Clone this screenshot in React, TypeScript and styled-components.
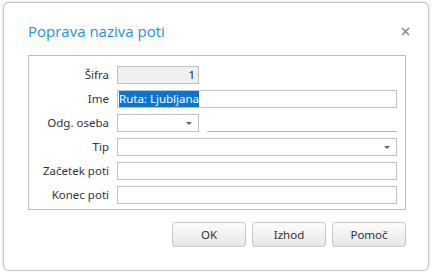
import React from "react";
import styled, { createGlobalStyle } from "styled-components";

const Global = createGlobalStyle`
  html, body { margin: 0; padding: 0; background: #ffffff; }
  body { font-family: "Open Sans", "Noto Sans", sans-serif; }
`;

const Dialog = styled.div`
  box-sizing: border-box;
  margin: 2px 0 0 3px;
  width: 426px;
  height: 269px;
  border: 1px solid #c4c4c4;
  border-radius: 6px;
  background: #fff;
  box-shadow: 0 0 3px rgba(0, 0, 0, 0.18);
  display: flex;
  flex-direction: column;
`;

const Header = styled.div`
  height: 52px;
  display: flex;
  align-items: center;
  justify-content: space-between;
  padding: 0 18px 0 24px;
  box-sizing: border-box;
`;

const Title = styled.div`
  font-family: "Open Sans", sans-serif;
  font-size: 15px;
  color: #1d92dc;
  margin-top: 4px;
`;

const Close = styled.div`
  width: 10px;
  height: 10px;
  margin-top: 4px;
  display: flex;
  align-items: center;
  justify-content: center;
`;

const Fieldset = styled.div`
  box-sizing: border-box;
  margin-left: 24px;
  width: 378px;
  border: 1px solid #bdbdbd;
  padding: 10px 8px 5px 0;
  display: grid;
  grid-template-columns: 80px 1fr;
  column-gap: 8px;
  row-gap: 6px;
`;

const Label = styled.div`
  font-family: "Noto Sans", sans-serif;
  font-size: 11.5px;
  color: #333;
  text-align: right;
  height: 18px;
  line-height: 18px;
  white-space: nowrap;
`;

const Input = styled.div<{ $readonly?: boolean; $align?: string; $width?: number }>`
  box-sizing: border-box;
  height: 18px;
  width: ${(p) => (p.$width ? `${p.$width}px` : "auto")};
  border: 1px solid #c0c0c0;
  background: ${(p) => (p.$readonly ? "#f0f0f0" : "#fff")};
  font-family: "Noto Sans", sans-serif;
  font-size: 11.5px;
  line-height: 16px;
  color: #222;
  text-align: ${(p) => p.$align || "left"};
  padding: 0 3px 0 1px;
  white-space: nowrap;
  overflow: hidden;
`;

const Selected = styled.span`
  background: #0a74d6;
  color: #fff;
  padding: 1px 0;
`;

const Combo = styled.div<{ $width?: number }>`
  box-sizing: border-box;
  height: 18px;
  width: ${(p) => (p.$width ? `${p.$width}px` : "auto")};
  border: 1px solid #c0c0c0;
  background: #fff;
  display: flex;
  align-items: center;
  justify-content: flex-end;
  padding-right: 6px;
`;

const Arrow = styled.div`
  width: 0;
  height: 0;
  border-left: 3.5px solid transparent;
  border-right: 3.5px solid transparent;
  border-top: 3.5px solid #666;
`;

const Pair = styled.div`
  display: flex;
  gap: 8px;
`;

const Underline = styled.div`
  flex: 1;
  height: 18px;
  box-sizing: border-box;
  border-bottom: 1px solid #b8b8b8;
`;

const Buttons = styled.div`
  display: flex;
  gap: 6px;
  margin: 12px 0 0 168px;
`;

const Button = styled.div`
  box-sizing: border-box;
  width: 74px;
  height: 25px;
  border: 1px solid #c6c6c6;
  border-radius: 3px;
  background: linear-gradient(#fdfdfd, #e6e6e6);
  font-family: "Noto Sans", sans-serif;
  font-size: 11.5px;
  color: #333;
  display: flex;
  align-items: center;
  justify-content: center;
`;

export default function App() {
  return (
    <>
      <Global />
      <Dialog>
        <Header>
          <Title>Poprava naziva poti</Title>
          <Close>
            <svg width="9" height="9" viewBox="0 0 9 9">
              <path d="M1 1L8 8M8 1L1 8" stroke="#8a8a8a" strokeWidth="1.6" />
            </svg>
          </Close>
        </Header>
        <Fieldset>
          <Label>Šifra</Label>
          <Pair>
            <Input $readonly $align="right" $width={82}>1</Input>
          </Pair>
          <Label>Ime</Label>
          <Input>
            <Selected>Ruta: Ljubljana</Selected>
          </Input>
          <Label>Odg. oseba</Label>
          <Pair>
            <Combo $width={82}>
              <Arrow />
            </Combo>
            <Underline />
          </Pair>
          <Label>Tip</Label>
          <Combo>
            <Arrow />
          </Combo>
          <Label>Začetek poti</Label>
          <Input />
          <Label>Konec poti</Label>
          <Input />
        </Fieldset>
        <Buttons>
          <Button>OK</Button>
          <Button>Izhod</Button>
          <Button>Pomoč</Button>
        </Buttons>
      </Dialog>
    </>
  );
}
